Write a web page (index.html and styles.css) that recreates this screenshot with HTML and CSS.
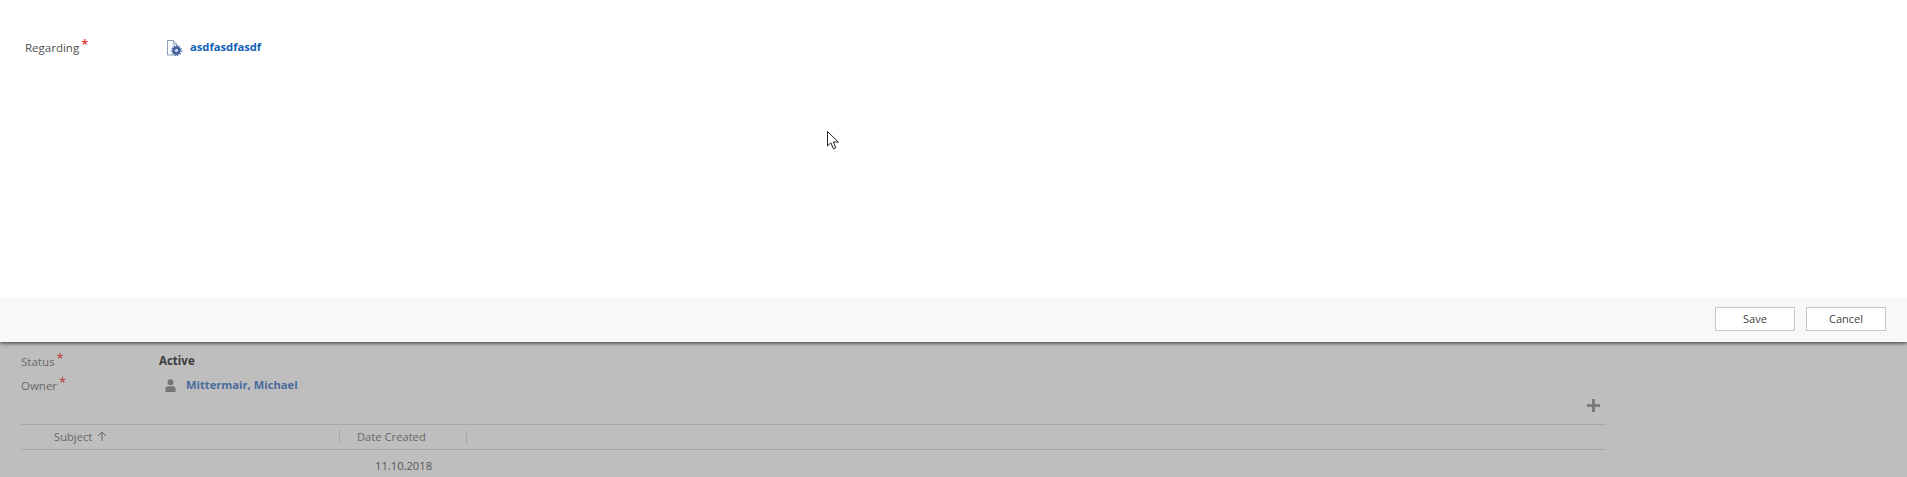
FILE: index.html
```html
<!DOCTYPE html>
<html lang="en">
<head>
<meta charset="utf-8">
<title>Regarding</title>
<link rel="stylesheet" href="styles.css">
</head>
<body>
<div class="dialog">
  <div class="dialog-body">
    <div class="field">
      <div class="label">Regarding<span class="req">*</span></div>
      <svg class="doc-icon" width="16" height="16" viewBox="0 0 16 16">
        <path d="M0.5 0.5h6l3.5 3.5v11h-9.500z" fill="#fafbfd" stroke="#8f9db5"/>
        <path d="M6.500 0.5v3.500h3.500" fill="#dfe5ef" stroke="#8f9db5"/>
        <circle cx="9.500" cy="10.500" r="4.200" fill="#3f5d98"/>
        <circle cx="9.500" cy="10.500" r="4.800" fill="none" stroke="#4d6aa5" stroke-width="1.300" stroke-dasharray="1.500 1.200"/>
        <circle cx="9.500" cy="10.500" r="1.700" fill="#c9d6ec"/>
      </svg>
      <a class="link">asdfasdfasdf</a>
    </div>
  </div>
  <div class="footer">
    <button class="btn">Save</button>
    <button class="btn">Cancel</button>
  </div>
</div>
<div class="behind">
  <div class="row">
    <div class="label-back">Status<span class="req-back">*</span></div>
    <div class="value">Active</div>
  </div>
  <div class="row">
    <div class="label-back">Owner<span class="req-back">*</span></div>
    <svg class="user-icon" width="11" height="13" viewBox="0 0 11 13">
      <circle cx="5.500" cy="3.200" r="3" fill="#757575"/>
      <path d="M0.500 13v-3.200c0-1.600 1.200-2.600 2.800-2.600h4.400c1.600 0 2.800 1 2.800 2.600V13z" fill="#757575"/>
    </svg>
    <a class="owner-link">Mittermair, Michael</a>
  </div>
  <div class="grid">
    <div class="toolbar">
      <svg class="plus" width="13" height="13" viewBox="0 0 13 13">
        <path d="M5 0h3v5h5v3H8v5H5V8H0V5h5z" fill="#7b7b7b"/>
      </svg>
    </div>
    <div class="head">
      <div class="col-subject">Subject
        <svg class="arrow" width="10" height="10" viewBox="0 0 10 10">
          <path d="M5 10V1M1 5l4-4 4 4" fill="none" stroke="#666" stroke-width="1"/>
        </svg>
      </div>
      <div class="col-date">Date Created</div>
    </div>
    <div class="data-row">11.10.2018</div>
  </div>
</div>
<svg class="cursor" width="13" height="19" viewBox="0 0 13 19">
  <path d="M0.500 0.500v14.500l3.400-3.200 2.500 6 2.400-1-2.500-5.800h5z" fill="#fff" stroke="#222" stroke-width="1"/>
</svg>
</body>
</html>
```
FILE: styles.css
```css
html, body {
  margin: 0;
  padding: 0;
  height: 477px;
  overflow: hidden;
  background: #bebebe;
  font-family: "Open Sans", "Noto Sans", sans-serif;
}
.dialog {
  position: relative;
  z-index: 1;
  box-shadow: 0 1px 4px rgba(0, 0, 0, 0.75);
}
.dialog-body {
  height: 297px;
  background: #fff;
  box-sizing: border-box;
  padding-top: 36px;
}
.field {
  display: flex;
  align-items: center;
  height: 20px;
  padding-left: 25px;
}
.label {
  width: 142px;
  padding-top: 2px;
  font-size: 11.5px;
  color: #505050;
}
.req {
  color: #e00000;
  font-size: 13px;
  margin-left: 2px;
  position: relative;
  top: -3px;
}
.doc-icon {
  flex: none;
  margin-top: 4px;
}
.link {
  margin-left: 7px;
  font-size: 11.2px;
  font-weight: 700;
  color: #1160b7;
}
.footer {
  height: 45px;
  background: #f8f8f8;
  box-sizing: border-box;
  padding: 10px 21px 0 0;
  display: flex;
  justify-content: flex-end;
  gap: 11px;
}
.btn {
  width: 80px;
  height: 24px;
  box-sizing: border-box;
  background: #fff;
  border: 1px solid #c6c6c6;
  padding: 0 0 1px;
  font-family: inherit;
  font-size: 11px;
  color: #444;
}
.behind { padding-top: 6px; }
.row {
  display: flex;
  align-items: center;
  height: 24px;
  padding-left: 21px;
}
.label-back {
  width: 138px;
  padding-top: 2px;
  font-size: 11.5px;
  color: #696969;
}
.req-back {
  color: #b53a3a;
  font-size: 13px;
  margin-left: 2px;
  position: relative;
  top: -3px;
}
.value {
  font-size: 11.5px;
  font-weight: 700;
  color: #3a3a3a;
}
.user-icon {
  flex: none;
  margin: 3px 0 0 6px;
}
.owner-link {
  margin-left: 10px;
  font-size: 11.2px;
  font-weight: 700;
  color: #4a6b9c;
}
.grid {
  width: 1585px;
  margin-left: 21px;
}
.toolbar {
  height: 25px;
  display: flex;
  justify-content: flex-end;
  align-items: flex-start;
  padding: 1px 6px 0 0;
  margin-top: 2px;
  border-bottom: 1px solid #a8a8a8;
}
.head {
  display: flex;
  align-items: center;
  height: 24px;
  border-bottom: 1px solid #a8a8a8;
  font-size: 11.2px;
  color: #696969;
}
.col-subject {
  width: 319px;
  box-sizing: border-box;
  padding-left: 33px;
  height: 14px;
  line-height: 14px;
  border-right: 1px solid #a8a8a8;
}
.arrow { margin-left: 2px; }
.col-date {
  width: 127px;
  box-sizing: border-box;
  padding-left: 17px;
  height: 14px;
  line-height: 14px;
  border-right: 1px solid #a8a8a8;
}
.data-row {
  padding: 8px 0 0 354px;
  font-size: 11.2px;
  color: #555;
}
.cursor {
  position: absolute;
  left: 827px;
  top: 131px;
  z-index: 2;
}
```
